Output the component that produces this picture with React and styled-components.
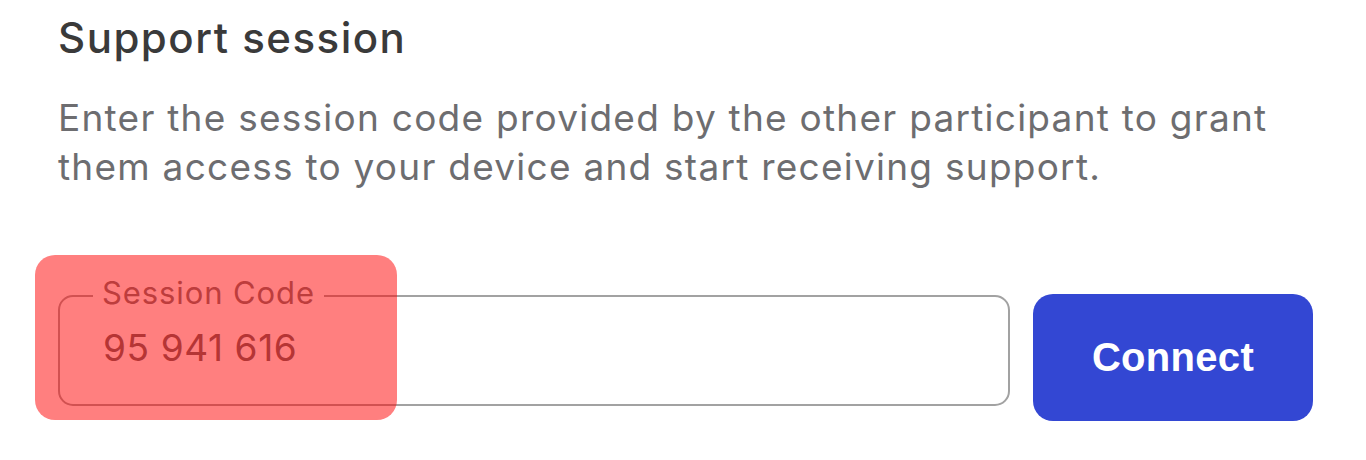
import styled, { createGlobalStyle } from "styled-components"

const GlobalStyle = createGlobalStyle`
    html, body {
        margin: 0;
        padding: 0;
        background: #ffffff;
    }
    body {
        font-family: 'Inter', 'Noto Sans', sans-serif;
    }
`

export default function App() {
    return (
        <PageContainer>
            <GlobalStyle />
            <Title>Support session</Title>
            <Description>
                Enter the session code provided by the other participant to grant
                them access to your device and start receiving support.
            </Description>

            <FormRow>
                <CodeField>
                    <FieldLabel>Session Code</FieldLabel>
                    <CodeInput type="text" defaultValue="95 941 616" readOnly />
                </CodeField>
                <ConnectButton type="button">Connect</ConnectButton>
            </FormRow>

            <Highlight />
        </PageContainer>
    )
}

const PageContainer = styled.div`
    position: relative;
    width: 1366px;
    height: 460px;
    box-sizing: border-box;
    padding: 12px 0 0 58px;
    overflow: hidden;
`
const Title = styled.h1`
    margin: 0;
    font-size: 42px;
    font-weight: 500;
    line-height: 52px;
    color: #3a3a3a;
    letter-spacing: 1.5px;
`
const Description = styled.p`
    margin: 29px 0 0 0;
    width: 1240px;
    font-size: 37px;
    font-weight: 400;
    line-height: 49px;
    letter-spacing: 1.25px;
    color: #6d6d70;
`
const FormRow = styled.div`
    display: flex;
    flex-direction: row;
    align-items: flex-start;
    gap: 23px;
    margin-top: 104px;
`
const CodeField = styled.fieldset`
    position: relative;
    margin: 0;
    width: 952px;
    height: 111px;
    box-sizing: border-box;
    border: 2px solid #a2a2a2;
    border-radius: 15px;
    padding: 0 0 0 43px;
`
const FieldLabel = styled.span`
    position: absolute;
    top: -24px;
    left: 33px;
    padding: 0 9px;
    background: #ffffff;
    font-size: 31px;
    line-height: 40px;
    letter-spacing: 0.9px;
    color: #7a7a7a;
`
const CodeInput = styled.input`
    margin-top: 29px;
    border: none;
    outline: none;
    background: transparent;
    padding: 0;
    width: 600px;
    font-family: 'Inter', 'Noto Sans', sans-serif;
    font-size: 37px;
    line-height: 44px;
    letter-spacing: 0.6px;
    color: #6a6a6a;
`
const ConnectButton = styled.button`
    width: 280px;
    height: 127px;
    margin-top: -1px;
    border: none;
    border-radius: 20px;
    background-color: #3347d3;
    color: #ffffff;
    font-family: 'Liberation Sans', Arial, sans-serif;
    font-weight: 700;
    font-size: 40px;
    letter-spacing: 0.3px;
    cursor: pointer;
`
const Highlight = styled.div`
    position: absolute;
    left: 35px;
    top: 255px;
    width: 362px;
    height: 165px;
    border-radius: 20px;
    background-color: rgba(255, 0, 0, 0.5);
    pointer-events: none;
`
